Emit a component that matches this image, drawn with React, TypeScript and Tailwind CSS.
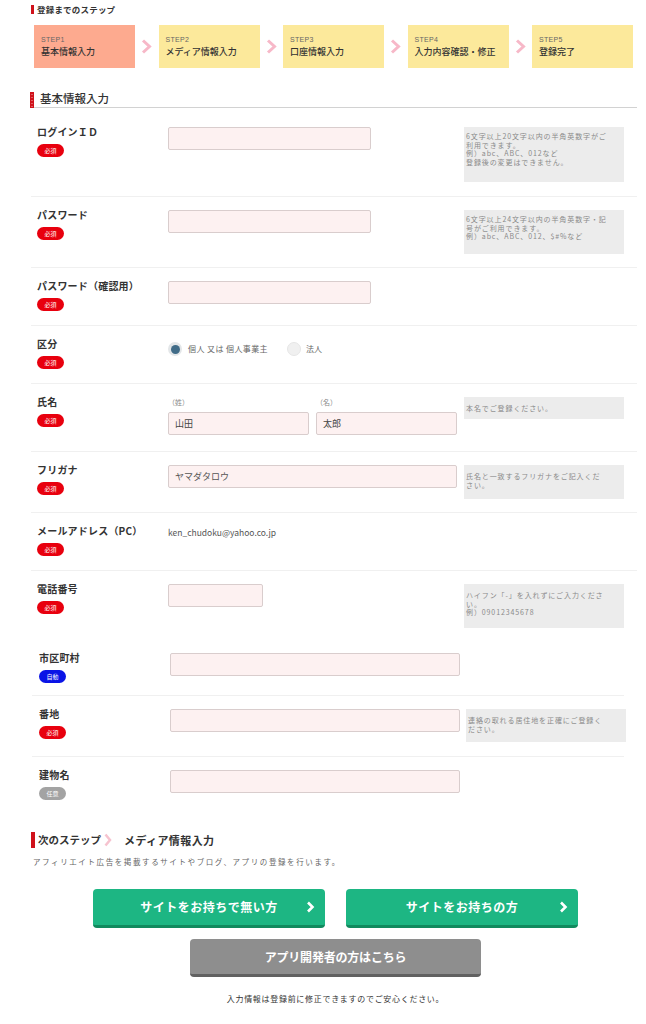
import React from 'react';

type BadgeKind = 'req' | 'auto' | 'opt';

function Badge({ kind }: { kind: BadgeKind }) {
  const color = { req: 'bg-[#e8000e]', auto: 'bg-[#0a14e6]', opt: 'bg-[#a3a3a3]' }[kind];
  const text = { req: '必須', auto: '自動', opt: '任意' }[kind];
  return (
    <span className={`mt-[6px] flex h-[13px] w-[27px] items-center justify-center rounded-full text-[6px] leading-none text-white ${color}`}>
      {text}
    </span>
  );
}

function Help({ lines, h, pt = 'pt-[5px]' }: { lines: string[]; h: string; pt?: string }) {
  return (
    <div className={`mt-[1px] w-[160px] shrink-0 bg-[#ececec] px-[2px] text-[7px] leading-[8.6px] tracking-[0.9px] whitespace-nowrap text-[#8a8a8a] ${h} ${pt}`}>
      {lines.map((l, i) => (
        <div key={i}>{l}</div>
      ))}
    </div>
  );
}

function Row({
  label,
  badge,
  help,
  children,
  cls,
}: {
  label: string;
  badge: BadgeKind;
  help?: React.ReactNode;
  children?: React.ReactNode;
  cls: string;
}) {
  return (
    <div className={`flex items-start ${cls}`}>
      <div className="flex w-[131px] shrink-0 flex-col items-start">
        <div className="text-[10px] leading-[12px] font-bold tracking-[0.2px] text-[#333]">{label}</div>
        <Badge kind={badge} />
      </div>
      <div className="w-[296px] shrink-0 pt-[1px]">{children}</div>
      {help}
    </div>
  );
}

function Input({ w, value, cls = '' }: { w: string; value?: string; cls?: string }) {
  return (
    <div className={`flex h-[23px] items-center rounded-[2px] border border-[#d9cdcd] bg-[#fdf1f1] px-[6px] text-[9px] text-[#444] ${w} ${cls}`}>
      {value}
    </div>
  );
}

function StepArrow() {
  return (
    <div className="flex w-[23.5px] items-center justify-center">
      <svg width="11" height="15" viewBox="0 0 11 15">
        <polyline points="2,1.5 8.5,7.5 2,13.5" fill="none" stroke="#f7b8c8" strokeWidth="3" />
      </svg>
    </div>
  );
}

const steps = [
  { no: 'STEP1', title: '基本情報入力', active: true },
  { no: 'STEP2', title: 'メディア情報入力' },
  { no: 'STEP3', title: '口座情報入力' },
  { no: 'STEP4', title: '入力内容確認・修正' },
  { no: 'STEP5', title: '登録完了' },
];

export default function App() {
  return (
    <div className="min-h-[1024px] w-[646px] bg-white pt-[4px] pb-[20px] font-['Noto_Sans_CJK_JP',sans-serif] text-[#333]">
      {/* steps header */}
      <div className="flex h-[10px] items-center pl-[31px]">
        <span className="h-[9px] w-[3px] bg-[#d0121b]" />
        <span className="ml-[3px] text-[8.5px] leading-[10px] font-bold tracking-[0.2px]">登録までのステップ</span>
      </div>

      <div className="mt-[11px] ml-[34px] flex">
        {steps.map((s, i) => (
          <React.Fragment key={s.no}>
            {i > 0 && <StepArrow />}
            <div className={`h-[43px] w-[101px] pt-[11px] pl-[7px] ${s.active ? 'bg-[#fdaa8f]' : 'bg-[#fce99b]'}`}>
              <div className="font-['Liberation_Sans',sans-serif] text-[7px] leading-[8px] tracking-[0.3px] text-[#666]">{s.no}</div>
              <div className="mt-[3px] text-[9px] leading-[10px] font-medium text-[#333]">{s.title}</div>
            </div>
          </React.Fragment>
        ))}
      </div>

      {/* section title */}
      <div className="mt-[24px] ml-[30px] flex w-[607px]">
        <svg width="4" height="16" viewBox="0 0 4 16" className="shrink-0">
          <rect width="4" height="16" fill="#d0121b" />
          {[2, 5, 8, 11, 14].map((y) => (
            <rect key={y} x="1.5" y={y} width="1" height="1" fill="#f3a9a9" />
          ))}
        </svg>
        <div className="h-[16px] flex-1 border-b border-[#d2d2d2] pl-[6px] text-[11.5px] leading-[12px] font-medium text-[#333]">
          基本情報入力
        </div>
      </div>

      {/* form */}
      <div className="ml-[31px] w-[606px]">
        <Row
          label="ログインＩＤ"
          badge="req"
          cls="h-[89px] border-b border-[#f0f0f0] pt-[18px] pl-[6px]"
          help={<Help h="h-[55px]" lines={['6文字以上20文字以内の半角英数字がご', '利用できます。', '例）abc、ABC、012など', '登録後の変更はできません。']} />}
        >
          <Input w="w-[203px]" />
        </Row>
        <Row
          label="パスワード"
          badge="req"
          cls="h-[71px] border-b border-[#f0f0f0] pt-[12px] pl-[6px]"
          help={<Help h="h-[44px]" lines={['6文字以上24文字以内の半角英数字・記', '号がご利用できます。', '例）abc、ABC、012、$#%など']} />}
        >
          <Input w="w-[203px]" />
        </Row>
        <Row label="パスワード（確認用）" badge="req" cls="h-[58px] border-b border-[#f0f0f0] pt-[12px] pl-[6px]">
          <Input w="w-[203px]" />
        </Row>
        <Row label="区分" badge="req" cls="h-[58px] border-b border-[#f0f0f0] pt-[12px] pl-[6px]">
          <div className="mt-[3px] flex h-[14px] items-center text-[8px] text-[#666]">
            <span className="flex h-[14px] w-[14px] items-center justify-center rounded-full bg-[#e3e6e8]">
              <span className="h-[9px] w-[9px] rounded-full bg-[#416c88]" />
            </span>
            <span className="ml-[6px] tracking-[0.4px]">個人 又は 個人事業主</span>
            <span className="ml-[19px] h-[14px] w-[14px] rounded-full border border-[#e6e6e6] bg-[#f0f0f0]" />
            <span className="ml-[5px]">法人</span>
          </div>
        </Row>
        <Row
          label="氏名"
          badge="req"
          cls="h-[68px] border-b border-[#f0f0f0] pt-[12px] pl-[6px]"
          help={<Help h="h-[22px]" pt="pt-[7px]" lines={['本名でご登録ください。']} />}
        >
          <div className="flex gap-[7px]">
            <div>
              <div className="h-[10px] text-[7px] leading-[10px] text-[#888]">（姓）</div>
              <Input w="w-[141px]" value="山田" cls="mt-[5px]" />
            </div>
            <div>
              <div className="h-[10px] text-[7px] leading-[10px] text-[#888]">（名）</div>
              <Input w="w-[141px]" value="太郎" cls="mt-[5px]" />
            </div>
          </div>
        </Row>
        <Row
          label="フリガナ"
          badge="req"
          cls="h-[61px] border-b border-[#f0f0f0] pt-[12px] pl-[6px]"
          help={<Help h="h-[34px]" pt="pt-[7px]" lines={['氏名と一致するフリガナをご記入くだ', 'さい。']} />}
        >
          <Input w="w-[289px]" value="ヤマダタロウ" cls="text-[8.5px] text-[#555]" />
        </Row>
        <Row label="メールアドレス（PC）" badge="req" cls="h-[58px] border-b border-[#f0f0f0] pt-[12px] pl-[6px]">
          <div className="text-[8.5px] leading-[12px] text-[#555]">ken_chudoku@yahoo.co.jp</div>
        </Row>
        <Row
          label="電話番号"
          badge="req"
          cls="h-[69px] pt-[12px] pl-[6px]"
          help={<Help h="h-[44px]" pt="pt-[7px]" lines={['ハイフン「-」を入れずにご入力くださ', 'い。', '例）09012345678']} />}
        >
          <Input w="w-[95px]" />
        </Row>

        {/* address */}
        <div className="ml-[1px] mr-[13px]">
          <Row label="市区町村" badge="auto" cls="h-[56px] border-b border-[#f0f0f0] pt-[12px] pl-[7px]">
            <Input w="w-[290px]" />
          </Row>
          <Row
            label="番地"
            badge="req"
            cls="h-[61px] border-b border-[#f0f0f0] pt-[12px] pl-[7px]"
            help={<Help h="h-[33px]" pt="pt-[7px]" lines={['連絡の取れる居住地を正確にご登録く', 'ださい。']} />}
          >
            <Input w="w-[290px]" />
          </Row>
          <Row label="建物名" badge="opt" cls="h-[56px] pt-[12px] pl-[7px]">
            <Input w="w-[290px]" />
          </Row>
        </div>
      </div>

      {/* next step */}
      <div className="mt-[19px] ml-[31px] flex h-[16px] items-center">
        <span className="h-[16px] w-[3.5px] bg-[#d0121b]" />
        <span className="ml-[3.5px] text-[10.5px] leading-[16px] font-bold text-[#333]">次のステップ</span>
        <svg width="8" height="14" viewBox="0 0 8 14" className="ml-[3px]">
          <polyline points="1.5,1.5 6,7 1.5,12.5" fill="none" stroke="#f6c3cf" strokeWidth="2.5" />
        </svg>
        <span className="ml-[12px] text-[11px] leading-[16px] font-bold tracking-[0.4px] text-[#333]">メディア情報入力</span>
      </div>
      <div className="mt-[9px] ml-[33px] text-[7.5px] leading-[10px] tracking-[1.6px] text-[#666]">
        アフィリエイト広告を掲載するサイトやブログ、アプリの登録を行います。
      </div>

      <div className="mt-[22px] ml-[31px] flex w-[609px] flex-col items-center">
        <div className="flex gap-[21px]">
          {['サイトをお持ちで無い方', 'サイトをお持ちの方'].map((t) => (
            <button
              key={t}
              className="relative flex h-[39px] w-[232px] items-center justify-center rounded-[4px] border-b-[3px] border-[#118a5e] bg-[#1db683] text-[12px] font-bold tracking-[0.5px] text-white"
            >
              {t}
              <svg width="9" height="12" viewBox="0 0 9 12" className="absolute right-[10px] top-[12px]">
                <polyline points="2,1.5 6.5,6 2,10.5" fill="none" stroke="#fff" strokeWidth="2.6" />
              </svg>
            </button>
          ))}
        </div>
        <button className="mt-[11px] flex h-[38px] w-[291px] items-center justify-center rounded-[4px] border-b-[3px] border-[#616161] bg-[#8e8e8e] text-[12px] font-bold tracking-[-0.2px] text-white">
          アプリ開発者の方はこちら
        </button>
        <div className="mt-[17px] text-[8px] leading-[10px] tracking-[0.7px] text-[#333]">
          入力情報は登録前に修正できますのでご安心ください。
        </div>
      </div>
    </div>
  );
}
